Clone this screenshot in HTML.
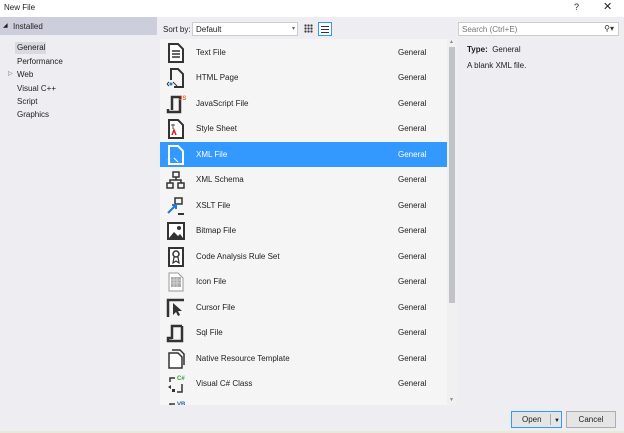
<!DOCTYPE html>
<html><head><style>
*{margin:0;padding:0;box-sizing:border-box}
body{width:624px;height:433px;background:#eeeef2;font-family:"Liberation Sans",sans-serif;font-size:8px;color:#1e1e1e;position:relative;overflow:hidden}
.a{position:absolute}
.row{position:absolute;left:160px;width:287px;height:25.5px}
.row svg{position:absolute;left:6px;top:3px}
.row .t{position:absolute;left:36px;top:8px}
.row .g{position:absolute;left:238px;top:8px}
.sel{background:#3399ff;color:#fff}
.btn{position:absolute;top:411px;height:17px;border:1px solid #adadad;background:#e5e5e5;text-align:center;line-height:15px;font-size:8px}
</style></head><body>
<div class="a" style="left:0;top:0;width:624px;height:17px;background:#fff"></div>
<div class="a" style="left:4px;top:3px">New File</div>
<div class="a" style="left:574px;top:2px;font-size:9px">?</div>
<div class="a" style="left:603px;top:0px;font-size:11px">✕</div>
<div class="a" style="left:0;top:17px;width:157px;height:18px;background:#cccedb"></div>
<div class="a" style="left:3px;top:22px;font-size:6px">◢</div>
<div class="a" style="left:13px;top:22px">Installed</div>
<div class="a" style="left:15px;top:42px;width:31px;height:12px;background:#d9d9e0"></div>
<div class="a" style="left:17px;top:43px">General</div>
<div class="a" style="left:17px;top:57px">Performance</div>
<div class="a" style="left:8px;top:70px;font-size:6px;color:#666">▷</div>
<div class="a" style="left:17px;top:70px">Web</div>
<div class="a" style="left:17px;top:84px">Visual C++</div>
<div class="a" style="left:17px;top:97px">Script</div>
<div class="a" style="left:17px;top:110px">Graphics</div>
<div class="a" style="left:163px;top:25px">Sort by:</div>
<div class="a" style="left:192px;top:22px;width:106px;height:14px;background:#fff;border:1px solid #ccc;padding:2px 3px">Default<span style="position:absolute;right:2px;top:2px;font-size:6px;color:#666">▾</span></div>
<div class="a" style="left:304px;top:24px;width:9px;height:9px;background:radial-gradient(circle,#333 1px,transparent 1.2px) 0 0/3px 3px"></div>
<div class="a" style="left:318px;top:22px;width:14px;height:14px;border:1px solid #3399ff;background:#fff"><div style="margin:3px 2px;height:7px;background:repeating-linear-gradient(#333 0 1px,transparent 1px 3px)"></div></div>
<div class="a" style="left:458px;top:22px;width:161px;height:14px;background:#fff;border:1px solid #ccc;padding:2px 3px;color:#777">Search (Ctrl+E)<span style="position:absolute;right:4px;top:1px;color:#333">⚲▾</span></div>
<div class="a" style="left:160px;top:39px;width:287px;height:366px;background:#f5f5f5"></div>
<div class="a" style="left:447px;top:39px;width:10px;height:366px;background:#f0f0f0"></div>
<div class="a" style="left:449px;top:47px;width:6px;height:256px;background:#c2c3c9"></div>
<div class="a" style="left:449px;top:39px;font-size:5px;color:#888">▲</div>
<div class="a" style="left:449px;top:397px;font-size:5px;color:#888">▼</div>

<div class="row" style="top:39.5px"><svg width="20" height="20"><path d="M3 1h9l5 5v13H3z" fill="#fff" stroke="#333" stroke-width="2"/><path d="M6 8h8M6 11h8M6 14h8" stroke="#333" stroke-width="1.5"/></svg><div class="t">Text File</div><div class="g">General</div></div>
<div class="row" style="top:65px"><svg width="20" height="20"><path d="M5 12V1h7l5 5v13H8" fill="none" stroke="#333" stroke-width="2"/><path d="M1 16l2-2M1 16l2 2M9 16l-2-2M9 16l2 2" stroke="#333"/><circle cx="5" cy="16" r="1.5" fill="#1e7bd6"/></svg><div class="t">HTML Page</div><div class="g">General</div></div>
<div class="row" style="top:90.5px"><svg width="20" height="20"><path d="M6 16V3h8v15H2v-3" fill="none" stroke="#333" stroke-width="2.5"/><text x="13" y="6" font-size="6" fill="#e8632b" font-family="Liberation Sans" font-weight="bold">JS</text></svg><div class="t">JavaScript File</div><div class="g">General</div></div>
<div class="row" style="top:116px"><svg width="20" height="20"><path d="M3 1h9l5 5v13H3z" fill="#fff" stroke="#333" stroke-width="2"/><path d="M7 5v5M5 6h4" stroke="#555"/><path d="M6 16l2-5 2 5" fill="none" stroke="#d02020" stroke-width="1.5"/></svg><div class="t">Style Sheet</div><div class="g">General</div></div>
<div class="row sel" style="top:141.5px"><svg width="20" height="20"><path d="M3 1h9l5 5v13H3z" fill="none" stroke="#fff" stroke-width="2"/><path d="M2 15l2-2M2 15l2 2M10 15l-2-2M10 15l2 2" stroke="#fff"/></svg><div class="t">XML File</div><div class="g">General</div></div>
<div class="row" style="top:167px"><svg width="20" height="20"><path d="M7 2h6v5H7zM1 13h6v5H1zM12 13h6v5h-6zM10 7v3M4 13v-3h11v3" fill="none" stroke="#333" stroke-width="1.5"/></svg><div class="t">XML Schema</div><div class="g">General</div></div>
<div class="row" style="top:192.5px"><svg width="20" height="20"><path d="M9 2h7v6h-7z" fill="none" stroke="#333" stroke-width="1.5"/><path d="M2 17l8-8M6 9h4v4" fill="none" stroke="#1e7bd6" stroke-width="2"/><path d="M12 18h6" stroke="#333" stroke-width="2"/></svg><div class="t">XSLT File</div><div class="g">General</div></div>
<div class="row" style="top:218px"><svg width="20" height="20"><rect x="2" y="2" width="16" height="16" fill="#fff" stroke="#333" stroke-width="2"/><path d="M3 17l5-6 4 4 2-2 3 4z" fill="#333"/><circle cx="13" cy="7" r="2" fill="#333"/></svg><div class="t">Bitmap File</div><div class="g">General</div></div>
<div class="row" style="top:243.5px"><svg width="20" height="20"><rect x="3" y="1" width="14" height="18" fill="#fff" stroke="#333" stroke-width="2"/><circle cx="10" cy="7" r="3" fill="none" stroke="#333" stroke-width="1.5"/><path d="M8 10l-1 6 3-2 3 2-1-6" fill="none" stroke="#333" stroke-width="1.2"/></svg><div class="t">Code Analysis Rule Set</div><div class="g">General</div></div>
<div class="row" style="top:269px"><svg width="20" height="20"><path d="M3 1h9l5 5v13H3z" fill="#fff" stroke="#999" stroke-width="1"/><rect x="5" y="5" width="10" height="10" fill="#aaa"/><path d="M5 8h10M5 11h10M8 5v10M11 5v10" stroke="#ddd" stroke-width=".7"/></svg><div class="t">Icon File</div><div class="g">General</div></div>
<div class="row" style="top:294.5px"><svg width="20" height="20"><path d="M2 19V2h16" fill="none" stroke="#333" stroke-width="2.5"/><path d="M7 5v12l3-3 2 4 2-1-2-4h4z" fill="#333"/></svg><div class="t">Cursor File</div><div class="g">General</div></div>
<div class="row" style="top:320px"><svg width="20" height="20"><path d="M6 16V3h10M16 3v15H2v-3h4" fill="none" stroke="#333" stroke-width="2.5"/></svg><div class="t">Sql File</div><div class="g">General</div></div>
<div class="row" style="top:345.5px"><svg width="20" height="20"><path d="M3 4h9l4 4v11H3z" fill="#fff" stroke="#333" stroke-width="1.5"/><path d="M6 1h8l4 4v11" fill="none" stroke="#333" stroke-width="1.5"/></svg><div class="t">Native Resource Template</div><div class="g">General</div></div>
<div class="row" style="top:371px"><svg width="20" height="20"><path d="M4 8V4h5M16 10v8h-5" fill="none" stroke="#333" stroke-width="1.5"/><text x="11" y="6" font-size="6" fill="#3a9a3a" font-family="Liberation Sans" font-weight="bold">C#</text><path d="M2 13l3-2v4z M6 15h3v3H6z" fill="#333"/></svg><div class="t">Visual C# Class</div><div class="g">General</div></div>
<div class="row" style="top:396.5px;height:8px;overflow:hidden"><svg width="20" height="8"><path d="M4 8V4h5" fill="none" stroke="#333" stroke-width="1.5"/><text x="11" y="6" font-size="6" fill="#1e5fb0" font-family="Liberation Sans" font-weight="bold">VB</text></svg></div>

<div class="a" style="left:467px;top:45px"><b>Type:</b>&nbsp;&nbsp;General</div>
<div class="a" style="left:467px;top:61px">A blank XML file.</div>
<div class="a" style="left:0;top:405px;width:624px;height:28px;background:#eeeef2"></div>
<div class="a" style="left:0;top:431px;width:624px;height:2px;background:#e9e9d8"></div>
<div class="btn" style="left:511px;width:51px;border-color:#3399ff;text-align:left;padding-left:10px">Open<span style="position:absolute;left:38px;top:2px;height:11px;border-left:1px solid #aaa;padding-left:3px;font-size:6px">▼</span></div>
<div class="btn" style="left:566px;width:50px">Cancel</div>
</body></html>
